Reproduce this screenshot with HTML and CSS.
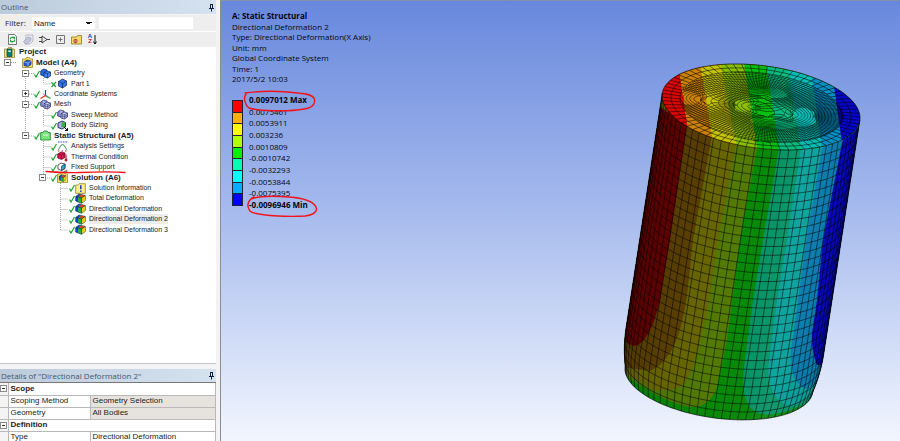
FILE: index.html
```html
<!DOCTYPE html>
<html lang="en">
<head>
<meta charset="utf-8">
<title>Static Structural - Directional Deformation 2</title>
<link rel="stylesheet" href="styles.css">
</head>
<body>
<svg class="defs" aria-hidden="true">
  <defs>
    <symbol id="check" viewBox="0 0 6 9"><path d="M.5 5.500 2 8 5.500 2" fill="none" stroke="#17a32b" stroke-width="1.200"/></symbol>
    <symbol id="cross" viewBox="0 0 6 9"><path d="M.5 3.500 5 8M5 3 .5 8" fill="none" stroke="#17a32b" stroke-width="1.200"/></symbol>
    <symbol id="pin" viewBox="0 0 7 9"><path d="M2 1.500h3M2.500 1v4M4.500 1v4M1 5.500h5M3.500 5v3.500" fill="none" stroke="#15203a"/></symbol>
    <symbol id="project" viewBox="0 0 11 11"><path d="M.5 2h3l1-1.500h3L8.500 2h2v8.500H.5z" fill="#f4dc6a" stroke="#8c7a2c" stroke-width=".7"/><path d="M3 2h5v7.500H3z" fill="#0d7d78" stroke="#064c4a" stroke-width=".7"/><path d="M4.300 3.500h2.500v1.500H4.300z" fill="#d5f2ee"/></symbol>
    <symbol id="model" viewBox="0 0 11 11"><path d="M.5 2h3l1-1.500h3L8.500 2h2v8.500H.5z" fill="#f7df5c" stroke="#8c7a2c" stroke-width=".7"/><path d="M2 5 5 3l4 1v3.500L6 9.500 2 8.500z" fill="#2c62d8" stroke="#102656" stroke-width=".7"/><path d="M2 5l4 1 3-2M6 6v3.500" fill="none" stroke="#b9d1ff" stroke-width=".6"/></symbol>
    <symbol id="geometry" viewBox="0 0 11 11"><path d="M.7 3 3.500 1 7 2v4L4 8 .7 7z" fill="#2665dc" stroke="#10265e" stroke-width=".7"/><path d="M4 4.700 7 3l3.500 1v4L7.500 10 4 9z" fill="#3f83f1" stroke="#10265e" stroke-width=".7"/><path d="M4 4.700l3.500.8 3-1.500M7.500 5.500V10" fill="none" stroke="#10265e" stroke-width=".6"/></symbol>
    <symbol id="part" viewBox="0 0 11 11"><path d="M1.500 3.500 5.500 1l4 2v4.500L5.500 10l-4-2z" fill="#3277e8" stroke="#10265e" stroke-width=".7"/><path d="M1.500 3.500l4 2 4-2.500M5.500 5.500V10" fill="none" stroke="#10265e" stroke-width=".7"/></symbol>
    <symbol id="axes" viewBox="0 0 11 11"><path d="M5.500 7V1" stroke="#1649d8" stroke-width="1.200"/><path d="M5.500 6.500 10.500 9.500" stroke="#21a83a" stroke-width="1.200"/><path d="M5.500 6.500.5 9.500" stroke="#e52b20" stroke-width="1.200"/><path d="m3 4.500 4 4" stroke="#d33" stroke-width=".8"/></symbol>
    <symbol id="mesh" viewBox="0 0 11 11"><path d="M.7 3 3.500 1 7 2v4L4 8 .7 7z" fill="#a9afe8" stroke="#1b2160" stroke-width=".7"/><path d="M4 4.700 7 3l3.500 1v4L7.500 10 4 9z" fill="#d0d4fa" stroke="#1b2160" stroke-width=".7"/><path d="M4 4.700l3.500.8 3-1.500M7.500 5.500V10M4 6.800l3.500.8 3-1.500M5.700 5v4.500M9 5v4M2 2v5" fill="none" stroke="#1b2160" stroke-width=".5"/></symbol>
    <symbol id="sizing" viewBox="0 0 11 11"><path d="M1 3 5 1l3.500 1.500V7L5 9 1 7.500z" fill="#a9afe8" stroke="#1b2160" stroke-width=".9"/><path d="M4.500 2.500h3.500v4.500H4.500z" fill="#3fae35"/><path d="M7 7l3.500 3.500M10.500 8v2.500H8" fill="none" stroke="#111" stroke-width="1"/></symbol>
    <symbol id="folder" viewBox="0 0 11 11"><path d="M.7 2.500h2L4 1h3l1 1.500h2.300v7.500H.7z" fill="#7be27e" stroke="#278c34" stroke-width=".9"/><path d="M3 5h5.500" stroke="#fff" stroke-width=".8"/></symbol>
    <symbol id="settings" viewBox="0 0 11 11"><path d="M1 1h9" stroke="#1f47d0" stroke-width="1.200" stroke-dasharray="1.500 1"/><path d="M.8 9C3 8 3 3.500 5.500 3.500S8 8 10.500 9" fill="none" stroke="#3b8c50" stroke-width="1"/><path d="M1 10h9" stroke="#d43131" stroke-width="1.200" stroke-dasharray="1.500 2"/></symbol>
    <symbol id="thermal" viewBox="0 0 11 11"><path d="M.7 3 4 1l4 1v4.500L4.500 8.500.7 7z" fill="#db1450" stroke="#6b0827" stroke-width=".7"/><path d="M.7 3l3.800 1L8 2M4.500 4v4" fill="none" stroke="#6b0827" stroke-width=".6"/><path d="M9 3.500V9" stroke="#c31a32" stroke-width="1.200"/><circle cx="9" cy="9" r="1.500" fill="#c31a32"/></symbol>
    <symbol id="support" viewBox="0 0 11 11"><path d="M1 3 4 1l4 1v4.500L4.500 8.500 1 7z" fill="#fff" stroke="#333" stroke-width=".8"/><path d="M4.500 4 8 2v4.500l-3.500 2z" fill="#27a8d6" stroke="#234" stroke-width=".7"/><path d="M6 10.300 10 8M8 10.300l2.500-1.500" stroke="#333" stroke-width=".7"/></symbol>
    <symbol id="result" viewBox="0 0 11 11"><path d="M.7 3.500 4 1 10.300 2.500v5L6.500 10.300.7 8z" fill="#20b14a" stroke="#123" stroke-width=".6"/><path d="M.9 3.500 4 1.200l1.500.4L3 4.200V8.800L.9 8z" fill="#173fd9"/><path d="M6.500 5 10.200 2.700v4.800L6.500 10z" fill="#f2c422"/><path d="M4 3 6.500 1.700 10 2.500 6.500 4.700z" fill="#e33b1e"/><path d="M6.500 5v5M1 3.500 6.500 5 10 2.500" fill="none" stroke="#111" stroke-width=".5"/></symbol>
    <symbol id="solution" viewBox="0 0 11 11"><path d="M.5 2h3l1-1.500h3L8.500 2h2v8.500H.5z" fill="#f7df5c" stroke="#8c7a2c" stroke-width=".7"/><use href="#result" x="1.500" y="2" width="8" height="8"/></symbol>
    <symbol id="info" viewBox="0 0 11 11"><path d="M.7 2h2L4 .7h6.300v9.600H.7z" fill="#fff08a" stroke="#8d7f2b" stroke-width=".8"/><path d="M5.800 2.300v4M5.800 7.500V9" stroke="#1635c8" stroke-width="1.500"/></symbol>
  </defs>
</svg>

<div class="app">
  <aside class="side">
    <section class="outline">
      <header class="bar"><h1>Outline</h1><svg class="pin"><use href="#pin"/></svg></header>
      <form class="filter">
        <label for="kind">Filter:</label>
        <select id="kind"><option>Name</option></select>
        <input type="text" aria-label="Filter text">
      </form>
      <div class="tools">
        <button type="button" aria-label="Refresh"><svg viewBox="0 0 11 11"><path d="M1.500.5h6l2 2v8h-8z" fill="#fff" stroke="#555" stroke-width=".8"/><path d="M3.300 5c.2-2 3-2.300 4-.8V2.800M7.700 6c-.2 2-3 2.300-4 .8v1.500" fill="none" stroke="#17a32b" stroke-width="1.300"/></svg></button>
        <button type="button" aria-label="Tag"><svg viewBox="0 0 11 11"><path d="M3 1h7v6L7 10H2z" fill="#e8e8f2" stroke="#a6a6bb" stroke-width=".7"/><path d="M.5 7.500 5 3l3 1-.5 3L3 10.500z" fill="#c3c6d8" stroke="#a0a1b6" stroke-width=".7"/></svg></button>
        <button type="button" aria-label="Link"><svg viewBox="0 0 11 11"><path d="M3 2v7l5-3.500zM0 3.500h3M0 7.500h3M8 5.500h3" fill="none" stroke="#333" stroke-width=".9"/></svg></button>
        <button type="button" aria-label="Expand all"><svg viewBox="0 0 11 11"><path d="M1.500 1.500h8v8h-8zM3.500 5.500h4M5.500 3.500v4" fill="none" stroke="#666" stroke-width=".9"/></svg></button>
        <button type="button" aria-label="Folder"><svg viewBox="0 0 11 11"><path d="M.5 3h5l1-1.500h4v8.500H.5z" fill="#f1d968" stroke="#8b7a2b" stroke-width=".8"/><circle cx="4.500" cy="7" r="2" fill="#b41d2e"/><path d="M3 7h3" stroke="#fff" stroke-width=".7"/></svg></button>
        <button type="button" class="sort" aria-label="Sort"><span><b>A</b><i>Z</i></span><svg viewBox="0 0 4 11"><path d="M2 1v9M.3 7.500 2 10l1.700-2.500" fill="none" stroke="#111"/></svg></button>
      </div>
      <div class="tree-pane">
        <svg class="links" viewBox="0 0 216 188" aria-hidden="true">
          <path d="M11 15.500h6M25.500 31v59M43.500 31v6h8M43.500 63v16h8M43.500 68.500h8M43.500 94v38M43.500 99.500h8M43.500 110h8M43.500 120.500h8M60.500 136v47M60.500 141.500h8M60.500 152h8M60.500 162.500h8M60.500 173h8M60.500 183h8M29 26.500h6M29 47h6M29 57.500h6M29 89h6M47 131h6"/>
        </svg>
        <ul class="tree">
          <li class="root"><svg class="ico"><use href="#project"/></svg><strong>Project</strong></li>
          <li class="l1"><button class="exp minus" aria-label="Collapse"></button><span class="mark"></span><svg class="ico"><use href="#model"/></svg><strong>Model (A4)</strong></li>
          <li class="l2"><button class="exp minus" aria-label="Collapse"></button><svg class="mark"><use href="#check"/></svg><svg class="ico"><use href="#geometry"/></svg><span>Geometry</span></li>
          <li class="l3"><span class="exp none"></span><svg class="mark"><use href="#cross"/></svg><svg class="ico"><use href="#part"/></svg><span>Part 1</span></li>
          <li class="l2"><button class="exp plus" aria-label="Expand"></button><svg class="mark"><use href="#check"/></svg><svg class="ico"><use href="#axes"/></svg><span>Coordinate Systems</span></li>
          <li class="l2"><button class="exp minus" aria-label="Collapse"></button><svg class="mark"><use href="#check"/></svg><svg class="ico"><use href="#mesh"/></svg><span>Mesh</span></li>
          <li class="l3"><span class="exp none"></span><svg class="mark"><use href="#check"/></svg><svg class="ico"><use href="#mesh"/></svg><span>Sweep Method</span></li>
          <li class="l3"><span class="exp none"></span><svg class="mark"><use href="#check"/></svg><svg class="ico"><use href="#sizing"/></svg><span>Body Sizing</span></li>
          <li class="l2"><button class="exp minus" aria-label="Collapse"></button><svg class="mark"><use href="#check"/></svg><svg class="ico"><use href="#folder"/></svg><strong>Static Structural (A5)</strong></li>
          <li class="l3"><span class="exp none"></span><svg class="mark"><use href="#check"/></svg><svg class="ico"><use href="#settings"/></svg><span>Analysis Settings</span></li>
          <li class="l3"><span class="exp none"></span><svg class="mark"><use href="#check"/></svg><svg class="ico"><use href="#thermal"/></svg><span>Thermal Condition</span></li>
          <li class="l3"><span class="exp none"></span><svg class="mark"><use href="#check"/></svg><svg class="ico"><use href="#support"/></svg><span>Fixed Support</span></li>
          <li class="l3"><button class="exp minus" aria-label="Collapse"></button><svg class="mark"><use href="#check"/></svg><svg class="ico"><use href="#solution"/></svg><strong>Solution (A6)</strong></li>
          <li class="l4"><span class="exp none"></span><svg class="mark"><use href="#check"/></svg><svg class="ico"><use href="#info"/></svg><span>Solution Information</span></li>
          <li class="l4"><span class="exp none"></span><svg class="mark"><use href="#check"/></svg><svg class="ico"><use href="#result"/></svg><span>Total Deformation</span></li>
          <li class="l4"><span class="exp none"></span><svg class="mark"><use href="#check"/></svg><svg class="ico"><use href="#result"/></svg><span>Directional Deformation</span></li>
          <li class="l4"><span class="exp none"></span><svg class="mark"><use href="#check"/></svg><svg class="ico"><use href="#result"/></svg><span class="picked">Directional Deformation 2</span></li>
          <li class="l4"><span class="exp none"></span><svg class="mark"><use href="#check"/></svg><svg class="ico"><use href="#result"/></svg><span>Directional Deformation 3</span></li>
        </ul>
        <svg class="pen" viewBox="0 0 216 188" aria-hidden="true"><path d="M46 124.500c12 1 22 1.500 34 1s30-1.200 45 0"/></svg>
      </div>
    </section>
    <section class="details">
      <header class="bar"><h2>Details of "Directional Deformation 2"</h2><svg class="pin"><use href="#pin"/></svg></header>
      <table>
        <colgroup><col class="c0"><col class="c1"><col></colgroup>
        <tr><td><button class="exp minus" aria-label="Collapse"></button></td><th colspan="2">Scope</th></tr>
        <tr><td></td><td>Scoping Method</td><td class="fixed">Geometry Selection</td></tr>
        <tr><td></td><td>Geometry</td><td class="fixed">All Bodies</td></tr>
        <tr><td><button class="exp minus" aria-label="Collapse"></button></td><th colspan="2">Definition</th></tr>
        <tr><td></td><td>Type</td><td>Directional Deformation</td></tr>
      </table>
    </section>
  </aside>

  <main class="view">
    <div class="info">
      <div class="caption">
        <strong>A: Static Structural</strong>
        <span>Directional Deformation 2</span>
        <span>Type: Directional Deformation(X Axis)</span>
        <span>Unit: mm</span>
        <span>Global Coordinate System</span>
        <span>Time: 1</span>
        <span>2017/5/2 10:03</span>
      </div>
      <div class="legend">
        <div class="scale"><i class="k1"></i><i class="k2"></i><i class="k3"></i><i class="k4"></i><i class="k5"></i><i class="k6"></i><i class="k7"></i><i class="k8"></i><i class="k9"></i></div>
        <div class="values">
          <strong>0.0097012 Max</strong><span>0.0075461</span><span>0.0053911</span><span>0.003236</span><span>0.0010809</span><span>-0.0010742</span><span>-0.0032293</span><span>-0.0053844</span><span>-0.0075395</span><strong>-0.0096946 Min</strong>
        </div>
        <svg class="pen" viewBox="230 90 90 130" aria-hidden="true">
          <path d="M246 94c-3 4-1 11 3 14 8 3 40 4 55 1 9-1 12-6 10-11-2-3-6-4-16-5-16-2-38-2-53 0"/>
          <path d="M254 197c-6 3-8 9-4 14 5 5 40 6 55 5 9-1 13-5 11-9-3-6-13-9-27-10-12-1-28-2-38 2"/>
        </svg>
      </div>
    </div>
    <svg class="model" viewBox="620 60 245 362" role="img" aria-label="Deformed cylinder mesh">
      <defs>
        <clipPath id="sideClip"><path id="sideShape"/></clipPath>
        <clipPath id="capClip"><path id="capShape"/></clipPath>
        <linearGradient id="shade" gradientUnits="userSpaceOnUse" x1="640" y1="240" x2="842" y2="270">
          <stop offset="0" stop-color="#000" stop-opacity=".12"/><stop offset=".5" stop-color="#000" stop-opacity="0"/><stop offset=".75" stop-color="#fff" stop-opacity=".05"/><stop offset="1" stop-color="#000" stop-opacity=".05"/>
        </linearGradient>
      </defs>
      <g clip-path="url(#sideClip)">
        <path fill="#088a08" d="M600 80h280v350H600z"/>
        <path fill="#547c04" d="M757 147 740 240 727 340 717 387Q713 401 700 406T653 393L615 370V80z"/>
        <path fill="#6c6a02" d="M736 143 718 240 708 307 698 350Q692 372 685 382T655 390L615 367V80z"/>
        <path fill="#5e4203" d="M712 136 693 240 688 287Q684 322 675 343T650 371L615 366V80z"/>
        <path fill="#640202" d="M687 124 670 240 660 300Q655 322 648 334T633 346L615 335V80z"/>
        <path fill="#069566" d="M779 149 763 240 753 300 744 367Q741 391 748 404T775 414Q796 410 812 400L880 340V80z"/>
        <path fill="#05a09b" d="M801 149 787 240 777 300 769 360Q766 385 777 398T800 403L880 350V80z"/>
        <path fill="#067cb0" d="M822 148 806 240 798 300 791 350Q789 371 797 382T812 386L880 350V80z"/>
        <path fill="#0505b8" d="M842 143 823 240 817 300 812 333Q811 351 817 365L880 365V80z"/>
        <path fill="url(#shade)" d="M600 80h280v350H600z"/>
      </g>
      <path id="sideMesh" class="wire" clip-path="url(#sideClip)"/>
      <g clip-path="url(#capClip)">
        <path fill="#d80606" d="M650 50h230v110H650z"/>
        <path fill="#cb8207" d="M676 50 687 124 694 170H890V50z"/>
        <path fill="#c5c405" d="M698 50 712 136 716 170H890V50z"/>
        <path fill="#8abf08" d="M718 50 736 143 740 170H890V50z"/>
        <path fill="#08bf12" d="M742 50 757 147 760 170H890V50z"/>
        <path fill="#0bbb80" d="M764 50 779 149 782 170H890V50z"/>
        <path fill="#08bcb5" d="M785 50 801 149 804 170H890V50z"/>
        <path fill="#078fc4" d="M808 50 822 148 826 170H890V50z"/>
        <path fill="#0606c8" d="M829 50 842 143 846 170H890V50z"/>
      </g>
      <path id="capMesh" class="wire fine" clip-path="url(#capClip)"/>
      <path id="outline" class="wire edge"/>
    </svg>
  </main>
</div>
<script src="mesh.js"></script>
</body>
</html>
```
FILE: styles.css
```css
* { box-sizing: border-box; }
body { margin: 0; font: 8px/10px "Open Sans", "Noto Sans", sans-serif; color: #1c1c24; background: #f0f0f0; }
h1, h2, ul { margin: 0; padding: 0; list-style: none; }
button { padding: 0; border: 0; background: none; font: inherit; }
.defs { position: absolute; width: 0; height: 0; }
.app { display: flex; height: 100vh; overflow: hidden; }
.side { flex: 0 0 221px; display: flex; flex-direction: column; gap: 5px; padding-right: 4px; border-right: 1px solid #8d8d8d; background: #f3f3f5; }
.outline { flex: 1; min-height: 0; display: flex; flex-direction: column; border-bottom: 1px solid #c4c4c4; }
.bar { flex: none; display: flex; align-items: center; justify-content: space-between; height: 14px; padding: 0 1px; background: linear-gradient(90deg, #bccbdb, #d5e2f0); color: #46566b; }
.bar h1, .bar h2 { font-size: 8px; font-weight: 400; }
.pin { width: 7px; height: 9px; }

.filter { flex: none; display: flex; align-items: center; height: 17px; margin-top: 1px; padding-left: 5px; border-bottom: 1px solid #fff; background: #eee; }
.filter label { width: 27px; }
.filter select { width: 63px; height: 12px; padding: 0 2px; border: 0; appearance: none; background-color: #fff; font-family: "Liberation Sans", sans-serif; font-size: 8px; color: inherit;
  background-image: linear-gradient(45deg, transparent 50%, #111 50%), linear-gradient(-45deg, transparent 50%, #111 50%);
  background-size: 3px 3px; background-position: 54px 5px, 57px 5px; background-repeat: no-repeat; }
.filter input { width: 94px; height: 12px; margin-left: 4px; padding: 0; border: 0; background: #fff; font: inherit; }
.tools { flex: none; display: flex; align-items: center; gap: 5px; height: 15px; padding-left: 7px; background: #eee; }
.tools button { display: flex; width: 11px; height: 11px; }
.tools svg { width: 11px; height: 11px; }
.tools .sort span { display: flex; flex-direction: column; width: 6px; font: 700 6px/5px "Liberation Sans", sans-serif; color: #1f3bb5; }
.tools .sort i { font-style: normal; color: #b5202d; }
.tools .sort svg { width: 4px; }

.tree-pane { flex: 1; position: relative; background: #fff; }
.links, .tree-pane .pen { position: absolute; left: 0; top: 0; width: 216px; height: 188px; }
.links path { fill: none; stroke: #a8a8a8; stroke-width: 1; stroke-dasharray: 1 1; }
.pen { pointer-events: none; }
.pen path { fill: none; stroke: #f3121c; stroke-width: 1.4; stroke-linecap: round; }
.tree { position: relative; display: grid; grid-template-rows: repeat(18, 1fr); height: 188px; font: 7px/10px "Liberation Sans", sans-serif; }
.tree strong { font: 700 8px/10px "Liberation Sans", sans-serif; }
.tree li { display: flex; align-items: center; white-space: nowrap; min-height: 0; }
.tree .ico { flex: none; width: 11px; height: 11px; margin-right: 2px; }
.tree .mark { flex: none; width: 6px; height: 9px; margin-left: 5px; }
.tree .root { padding-left: 4px; }
.tree .root .ico { margin-right: 4px; }
.tree .l1 { padding-left: 4px; }
.tree .l1 .ico, .tree .l2 .ico, .tree .l3 .ico, .tree .l4 .ico { margin-right: 3px; }
.tree .l2 { padding-left: 22px; }
.tree .l3 { padding-left: 39px; }
.tree .l4 { padding-left: 57px; }
.picked { background: #ececec; }
.exp { flex: none; display: block; width: 7px; height: 7px; border: 1px solid #8a8a8a; background: linear-gradient(#333, #333) center / 3px 1px no-repeat #fff; }
.exp.plus { background: linear-gradient(#333, #333) center / 3px 1px no-repeat, linear-gradient(#333, #333) center / 1px 3px no-repeat #fff; }
.exp.none { visibility: hidden; }

.details { flex: 0 0 72px; overflow: hidden; background: #fff; }
.details .bar { border-bottom: 1px solid #777; }
.details table { width: 100%; table-layout: fixed; border-collapse: collapse; font: 8px/10px "Liberation Sans", sans-serif; }
.c0 { width: 8px; }
.c1 { width: 82px; }
.details td, .details th { height: 12px; padding: 0 0 0 2px; border: 1px solid #b9b9b9; border-top: 0; line-height: 10px; text-align: left; white-space: nowrap; }
.details td:first-child { padding: 0; border-left: 0; background: #f4f4f4; }
.details .fixed { background: #e6e3df; }

.view { flex: 1; display: flex; justify-content: space-between; padding: 10px 35px 0 11px; border-top: 1px solid #8590ab; background: linear-gradient(#6888dd, #a9bdee 50%, #f2f6fe); color: #05060c; }
.caption { display: grid; grid-template-rows: repeat(7, 1fr); height: 74px; white-space: nowrap; }
.caption > * { line-height: 10px; }
.legend { position: relative; display: flex; gap: 6px; margin-top: 9px; }
.scale { display: grid; grid-template-rows: repeat(9, 1fr); width: 11px; height: 106px; margin-top: 6px; border: 1px solid #223; border-top: 0; }
.scale i { border-top: 1px solid #223; }
.k1 { background: #f00; } .k2 { background: #ffb000; } .k3 { background: #ff0; }
.k4 { background: #b0ff00; } .k5 { background: #00f000; } .k6 { background: #00ffb0; }
.k7 { background: #0ff; } .k8 { background: #00b0ff; } .k9 { background: #00f; }
.values { display: grid; grid-template-rows: repeat(10, 1fr); height: 117px; align-items: center; white-space: nowrap; }
.legend .pen { position: absolute; left: -2px; top: -4px; width: 90px; height: 130px; }
.model { flex: none; width: 245px; height: 362px; margin-top: 49px; }
.wire { fill: none; stroke: #000; stroke-opacity: .65; stroke-width: .8; }
.wire.fine { stroke-width: .7; stroke-opacity: .75; }
.wire.edge { stroke-width: 1; }
```
FILE: mesh.js
```javascript
// Cylinder: elliptical cap swept along a tilted axis, with a rounded lower rim.
const C = [761, 107], AXIS = [-42, 272], RX = 99, SKEW = 11, RY = 41.6, T0 = 0.064;
const cap = (x, y) => [C[0] + RX * x, C[1] + SKEW * x + RY * y];
function side(t, s) {
  const k = Math.max(0, (s - 0.86) / 0.14);
  const r = 1 - 0.05 * k * k;
  return [C[0] + AXIS[0] * s + RX * r * Math.cos(t),
          C[1] + AXIS[1] * s + r * (SKEW * Math.cos(t) + RY * Math.sin(t))];
}
const line = pts => 'M' + pts.map(p => p[0].toFixed(1) + ' ' + p[1].toFixed(1)).join('L');
const range = (n, f) => Array.from({ length: n + 1 }, (_, i) => f(i / n));
const put = (id, d) => document.getElementById(id).setAttribute('d', d);

const rim = range(90, u => cap(Math.cos(u * 2 * Math.PI), Math.sin(u * 2 * Math.PI)));
const hull = [
  ...range(40, u => side(T0 + Math.PI, u)),
  ...range(60, u => side(T0 + Math.PI * (1 - u), 1)),
  ...range(40, u => side(T0, 1 - u))
];
put('capShape', line(rim) + 'Z');
put('sideShape', line(hull) + 'Z');
put('outline', line(rim) + 'Z' + line(hull));

let d = '';
for (let i = 0; i <= 36; i++) d += line(range(40, u => side(T0 + Math.PI * i / 36, u)));
for (let j = 1; j < 31; j++) d += line(range(40, u => side(T0 + Math.PI * u, j / 31)));
put('sideMesh', d);

// Cap: plain rings near the rim, denser cells drawn round several foci inside.
const foci = [[-0.68, -0.02], [-0.14, 0.02], [0.05, -0.3], [0.08, 0.3], [0.38, 0.1]];
const CORE = 0.82;
d = '';
for (const r of [0.91, 0.82]) d += line(range(80, u => cap(r * Math.cos(u * 2 * Math.PI), r * Math.sin(u * 2 * Math.PI))));
for (let i = 0; i < 72; i++) {
  const a = T0 + i * Math.PI / 36;
  d += line([cap(Math.cos(a), Math.sin(a)), cap(CORE * Math.cos(a), CORE * Math.sin(a))]);
}
function field(x, y) {
  let re = 0, im = 0;
  for (const [a, b] of foci) {
    re += 0.5 * Math.log((x - a) ** 2 + (y - b) ** 2 + 0.02);
    im += Math.atan2(y - b, x - a);
  }
  return [re, im];
}
function contour(k, step, inside) {
  const N = 130, h = 2 / N;
  let out = '';
  for (let i = 0; i < N; i++) for (let j = 0; j < N; j++) {
    const x = -1 + i * h, y = -1 + j * h;
    if (!inside(x, y)) continue;
    const q = [[x, y], [x + h, y], [x + h, y + h], [x, y + h]];
    const v = q.map(p => field(p[0], p[1])[k]);
    if (k) for (let n = 1; n < 4; n++) v[n] -= 2 * Math.PI * Math.round((v[n] - v[0]) / (2 * Math.PI));
    const lo = Math.min(...v), hi = Math.max(...v);
    if (hi - lo > step) continue;
    for (let m = Math.ceil(lo / step); m * step < hi; m++) {
      const hit = [];
      for (let n = 0; n < 4; n++) {
        const a = v[n] - m * step, b = v[(n + 1) % 4] - m * step;
        if (a * b < 0) {
          const f = a / (a - b), p = q[n], r = q[(n + 1) % 4];
          hit.push(cap(p[0] + f * (r[0] - p[0]), p[1] + f * (r[1] - p[1])));
        }
      }
      if (hit.length === 2) out += line(hit);
    }
  }
  return out;
}
const core = (x, y) => x * x + y * y < CORE * CORE;
d += contour(0, 0.24, core) + contour(1, Math.PI / 16, core);
put('capMesh', d);
```
